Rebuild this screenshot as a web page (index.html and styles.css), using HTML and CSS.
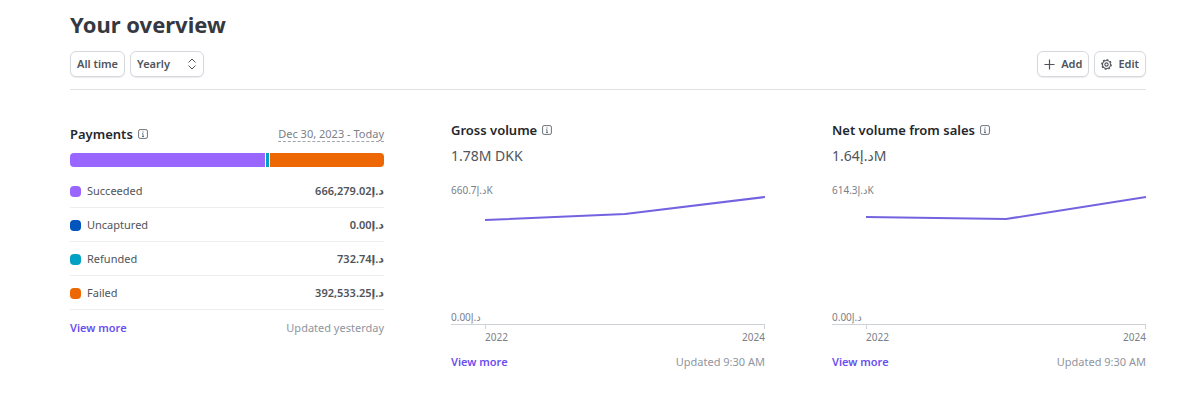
FILE: index.html
```html
<!DOCTYPE html>
<html lang="en">
<head>
    <meta charset="UTF-8">
    <meta name="viewport" content="width=device-width, initial-scale=1.0">
    <title>Your overview</title>
    <link rel="stylesheet" href="styles.css">
</head>
<body>
    <header>
        <h1>Your overview</h1>
        <div class="toolbar">
            <button type="button" class="btn">All time</button>
            <div class="select">
                <select id="interval" name="interval" aria-label="Interval">
                    <option>Daily</option>
                    <option>Monthly</option>
                    <option selected>Yearly</option>
                </select>
                <svg class="chevrons" viewBox="0 0 10 12"><path d="M1.5 4.5 5 1l3.5 3.5M1.5 7.5 5 11l3.5-3.5"/></svg>
            </div>
            <div class="actions">
                <button type="button" class="btn">
                    <svg class="icon" viewBox="0 0 12 12"><path d="M6 .5v11M.5 6h11"/></svg>
                    Add
                </button>
                <button type="button" class="btn">
                    <svg class="icon gear" viewBox="0 0 12 12">
                        <circle class="teeth" cx="6" cy="6" r="5.3" pathLength="32"/>
                        <circle cx="6" cy="6" r="4.4"/>
                        <circle cx="6" cy="6" r="1.8"/>
                    </svg>
                    Edit
                </button>
            </div>
        </div>
    </header>

    <main class="cards">
        <section class="card payments">
            <div class="card-head">
                <h2>Payments</h2>
                <svg class="info" viewBox="0 0 10 10"><rect x=".6" y=".6" width="8.8" height="8.8" rx="1.5"/><path d="M5 2.4v1.2M4.2 4.7H5v2.8M4 7.5h2"/></svg>
                <a class="range" href="#">Dec 30, 2023 - Today</a>
            </div>
            <div class="bar">
                <span class="succeeded"></span>
                <span class="refunded"></span>
                <span class="failed"></span>
            </div>
            <table>
                <tr><th scope="row"><i class="dot succeeded"></i>Succeeded</th><td>666,279.02د.إ</td></tr>
                <tr><th scope="row"><i class="dot uncaptured"></i>Uncaptured</th><td>0.00د.إ</td></tr>
                <tr><th scope="row"><i class="dot refunded"></i>Refunded</th><td>732.74د.إ</td></tr>
                <tr><th scope="row"><i class="dot failed"></i>Failed</th><td>392,533.25د.إ</td></tr>
            </table>
            <div class="card-foot">
                <a href="#">View more</a>
                <span>Updated yesterday</span>
            </div>
        </section>

        <section class="card">
            <div class="card-head">
                <h2>Gross volume</h2>
                <svg class="info" viewBox="0 0 10 10"><rect x=".6" y=".6" width="8.8" height="8.8" rx="1.5"/><path d="M5 2.4v1.2M4.2 4.7H5v2.8M4 7.5h2"/></svg>
            </div>
            <p class="total">1.78M DKK</p>
            <div class="plot">
                <span>660.7د.إK</span>
                <span>0.00د.إ</span>
                <svg viewBox="0 0 314 140" preserveAspectRatio="none"><polyline points="34,36 174,30 314,13"/></svg>
            </div>
            <div class="axis"><span>2022</span><span>2024</span></div>
            <div class="card-foot">
                <a href="#">View more</a>
                <span>Updated 9:30 AM</span>
            </div>
        </section>

        <section class="card">
            <div class="card-head">
                <h2>Net volume from sales</h2>
                <svg class="info" viewBox="0 0 10 10"><rect x=".6" y=".6" width="8.8" height="8.8" rx="1.5"/><path d="M5 2.4v1.2M4.2 4.7H5v2.8M4 7.5h2"/></svg>
            </div>
            <p class="total">1.64د.إM</p>
            <div class="plot">
                <span>614.3د.إK</span>
                <span>0.00د.إ</span>
                <svg viewBox="0 0 314 140" preserveAspectRatio="none"><polyline points="34,33 174,35 314,13"/></svg>
            </div>
            <div class="axis"><span>2022</span><span>2024</span></div>
            <div class="card-foot">
                <a href="#">View more</a>
                <span>Updated 9:30 AM</span>
            </div>
        </section>
    </main>
</body>
</html>
```
FILE: styles.css
```css
* {
    box-sizing: border-box;
}
body {
    font-family: "Noto Sans", "Open Sans", "DejaVu Sans", sans-serif;
    font-size: 11px;
    line-height: 16px;
    background-color: #fff;
    color: #50545a;
    margin: 0;
    padding: 8px 54px 24px 70px;
}
h1, h2, p {
    margin: 0;
}
h1 {
    font-size: 22px;
    line-height: 32px;
    font-weight: 700;
    color: #353841;
}
svg {
    fill: none;
    stroke: currentColor;
}
a {
    color: #6a4ff0;
    text-decoration: none;
}

/* toolbar */
.toolbar {
    display: flex;
    gap: 5px;
    padding: 11px 0 12px;
    border-bottom: 1px solid #dfe1e4;
}
.btn, select {
    font: inherit;
    font-weight: 600;
    color: #50545a;
    height: 26px;
    padding: 0 6px;
    background-color: #fff;
    border: 1px solid #d5d9de;
    border-radius: 6px;
    box-shadow: 0 1px 1px rgba(0, 0, 0, 0.08);
    cursor: pointer;
}
.btn {
    display: flex;
    align-items: center;
    gap: 6px;
}
.select {
    display: grid;
    align-items: center;
}
.select select, .chevrons {
    grid-area: 1 / 1;
}
.select select {
    appearance: none;
    width: 74px;
}
.chevrons {
    width: 10px;
    height: 12px;
    justify-self: end;
    margin-right: 7px;
    pointer-events: none;
}
.actions {
    display: flex;
    gap: 5px;
    margin-left: auto;
}
.icon {
    width: 11px;
    height: 11px;
    stroke-width: 1.3;
}
.gear {
    stroke-width: 1.2;
}
.gear .teeth {
    stroke-dasharray: 2 2;
}

/* cards */
.cards {
    display: grid;
    grid-template-columns: repeat(3, 1fr);
    column-gap: 67px;
    align-items: start;
    padding-top: 32px;
}
.payments {
    padding-top: 4px;
}
.card-head {
    display: flex;
    align-items: center;
    gap: 5px;
}
h2 {
    font-size: 13px;
    line-height: 16px;
    font-weight: 600;
    color: #24272c;
}
.info {
    width: 10px;
    height: 10px;
    color: #6c727a;
}
.range {
    margin-left: auto;
    line-height: 14px;
    color: #7b8088;
    border-bottom: 1px dashed #a0a5ac;
}
.bar {
    display: flex;
    gap: 1px;
    height: 14px;
    margin: 11px 0 7px;
    border-radius: 4px;
    overflow: hidden;
}
.bar .succeeded {
    flex: 195;
}
.bar .refunded {
    flex: 3;
}
.bar .failed {
    flex: 114;
}
.succeeded {
    background-color: #9966ff;
}
.uncaptured {
    background-color: #0055bc;
}
.refunded {
    background-color: #00a1c2;
}
.failed {
    background-color: #ed6704;
}
table {
    width: 100%;
    border-collapse: separate;
    border-spacing: 0;
}
th, td {
    height: 34px;
    padding: 0;
    border-bottom: 1px solid #ebedef;
}
th {
    font-weight: 400;
    text-align: left;
}
td {
    font-weight: 600;
    text-align: right;
    color: #50545a;
}
.dot {
    display: inline-block;
    width: 11px;
    height: 11px;
    margin-right: 6px;
    border-radius: 4px;
    vertical-align: middle;
}
.card-foot {
    display: flex;
    justify-content: space-between;
    padding-top: 10px;
    color: #8f959e;
}
.card-foot a {
    font-weight: 600;
}

/* charts */
.total {
    font-size: 14px;
    line-height: 20px;
    padding-top: 8px;
}
.plot {
    position: relative;
    display: flex;
    flex-direction: column;
    justify-content: space-between;
    height: 141px;
    margin-top: 18px;
    font-size: 10px;
    line-height: 13px;
    color: #7b8088;
    border-bottom: 1px solid #cfd3d8;
}
.plot svg {
    position: absolute;
    inset: 0;
    width: 100%;
    height: 100%;
    overflow: visible;
    stroke: #7463e0;
    stroke-width: 2;
}
.plot polyline {
    vector-effect: non-scaling-stroke;
}
.axis {
    display: flex;
    justify-content: space-between;
    margin-left: 34px;
    padding-top: 5px;
    font-size: 10px;
    line-height: 14px;
    color: #7b8088;
    background: linear-gradient(#cfd3d8, #cfd3d8) 0 0 / 1px 4px no-repeat,
        linear-gradient(#cfd3d8, #cfd3d8) 100% 0 / 1px 4px no-repeat;
}
```
